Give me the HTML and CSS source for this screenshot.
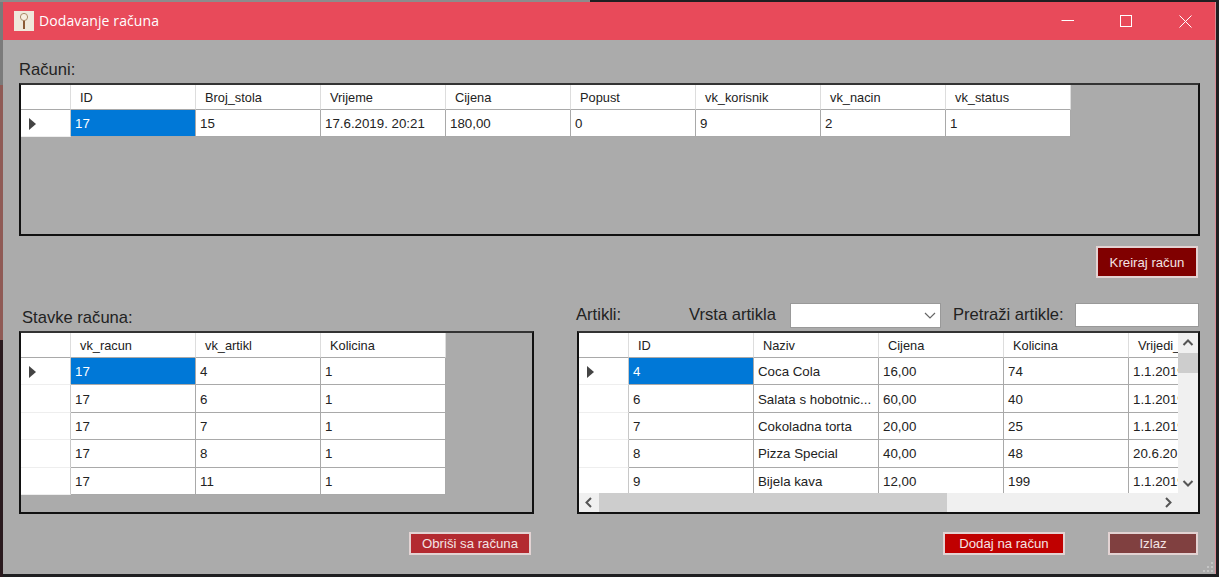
FILE: index.html
```html
<!DOCTYPE html>
<html lang="en">
<head>
  <meta charset="UTF-8" />
  <title>Dodavanje računa</title>
  <link rel="stylesheet" href="styles.css">
</head>
<body>

  <div class="window">
    <div class="titlebar">
      <svg class="app-icon" width="20" height="20" viewBox="0 0 20 20">
        <rect width="20" height="20" fill="#efe9dc"/>
        <path d="M10 9V18" stroke="#8a5a35" stroke-width="2"/>
        <circle cx="10" cy="6" r="3.600" fill="#f7efe0" stroke="#a98a68"/>
      </svg>
      <span class="title">Dodavanje računa</span>
      <div class="window-controls">
        <svg width="58" height="38" viewBox="0 0 58 38"><path d="M22.500 18.500H35" stroke="#fff"/></svg>
        <svg width="59" height="38" viewBox="0 0 59 38"><rect x="23.500" y="13.500" width="11" height="11" fill="none" stroke="#fff"/></svg>
        <svg width="59" height="38" viewBox="0 0 59 38"><path d="M23.500 13.500L35.500 25.500M35.500 13.500L23.500 25.500" stroke="#fff"/></svg>
      </div>
    </div>

    <div class="content">
      <div class="label-row">Računi:</div>
      <div class="grid-box grid-top">
        <table class="grid">
          <tr class="head">
            <th class="row-head"></th><th>ID</th><th>Broj_stola</th><th>Vrijeme</th><th>Cijena</th><th>Popust</th><th>vk_korisnik</th><th>vk_nacin</th><th>vk_status</th>
          </tr>
          <tr>
            <td class="row-head"><span class="arrow"></span></td><td class="selected">17</td><td>15</td><td>17.6.2019. 20:21</td><td>180,00</td><td>0</td><td>9</td><td>2</td><td>1</td>
          </tr>
        </table>
      </div>

      <div class="action-row">
        <button class="btn btn-create">Kreiraj račun</button>
      </div>

      <div class="lower">
        <div class="toolbar toolbar-left">Stavke računa:</div>
        <div class="toolbar toolbar-right">
          <span class="lbl-artikli">Artikli:</span>
          <span class="lbl-vrsta">Vrsta artikla</span>
          <div class="combo">
            <svg width="12" height="7" viewBox="0 0 12 7"><path d="M1 1L6 6L11 1" fill="none" stroke="#666" stroke-width="1.200"/></svg>
          </div>
          <span class="lbl-search">Pretraži artikle:</span>
          <div class="search"></div>
        </div>

        <div class="grid-box grid-items">
          <table class="grid">
            <tr class="head"><th class="row-head"></th><th>vk_racun</th><th>vk_artikl</th><th>Kolicina</th></tr>
            <tr><td class="row-head"><span class="arrow"></span></td><td class="selected">17</td><td>4</td><td>1</td></tr>
            <tr><td class="row-head"></td><td>17</td><td>6</td><td>1</td></tr>
            <tr><td class="row-head"></td><td>17</td><td>7</td><td>1</td></tr>
            <tr><td class="row-head"></td><td>17</td><td>8</td><td>1</td></tr>
            <tr><td class="row-head"></td><td>17</td><td>11</td><td>1</td></tr>
          </table>
        </div>

        <div class="grid-box grid-articles">
          <div class="viewport">
            <table class="grid">
              <tr class="head"><th class="row-head"></th><th>ID</th><th>Naziv</th><th>Cijena</th><th>Kolicina</th><th>Vrijedi_do</th></tr>
              <tr><td class="row-head"><span class="arrow"></span></td><td class="selected">4</td><td>Coca Cola</td><td>16,00</td><td>74</td><td>1.1.2019.</td></tr>
              <tr><td class="row-head"></td><td>6</td><td>Salata s hobotnic...</td><td>60,00</td><td>40</td><td>1.1.2019.</td></tr>
              <tr><td class="row-head"></td><td>7</td><td>Cokoladna torta</td><td>20,00</td><td>25</td><td>1.1.2019.</td></tr>
              <tr><td class="row-head"></td><td>8</td><td>Pizza Special</td><td>40,00</td><td>48</td><td>20.6.2019.</td></tr>
              <tr><td class="row-head"></td><td>9</td><td>Bijela kava</td><td>12,00</td><td>199</td><td>1.1.2019.</td></tr>
            </table>
          </div>
          <div class="vscroll">
            <svg width="20" height="20" viewBox="0 0 20 20"><path d="M5.500 12L10 7.500L14.500 12" fill="none" stroke="#555" stroke-width="2"/></svg>
            <div class="vthumb"></div>
            <svg class="vdown" width="20" height="20" viewBox="0 0 20 20"><path d="M5.500 8L10 12.500L14.500 8" fill="none" stroke="#555" stroke-width="2"/></svg>
          </div>
          <div class="hscroll">
            <svg width="20" height="19" viewBox="0 0 20 19"><path d="M12 5L7.500 9.500L12 14" fill="none" stroke="#555" stroke-width="2"/></svg>
            <div class="hthumb"></div>
            <svg class="hright" width="20" height="19" viewBox="0 0 20 19"><path d="M8 5L12.500 9.500L8 14" fill="none" stroke="#555" stroke-width="2"/></svg>
          </div>
          <div class="corner"></div>
        </div>

        <div class="footer footer-left">
          <button class="btn btn-remove">Obriši sa računa</button>
        </div>
        <div class="footer footer-right">
          <button class="btn btn-add">Dodaj na račun</button>
          <button class="btn btn-exit">Izlaz</button>
        </div>
      </div>
    </div>

    <svg class="grip" width="12" height="12" viewBox="0 0 12 12" fill="#c4c4c4">
      <rect x="9" y="1" width="2" height="2"/>
      <rect x="5" y="5" width="2" height="2"/><rect x="9" y="5" width="2" height="2"/>
      <rect x="1" y="9" width="2" height="2"/><rect x="5" y="9" width="2" height="2"/><rect x="9" y="9" width="2" height="2"/>
    </svg>
  </div>

</body>
</html>
```

FILE: styles.css
```css
:root {
  --panel: #ababab;
  --title: #e84a5a;
  --line: #a9a9a9;
  --text: #222;
}

* {
  box-sizing: border-box;
}

html, body {
  height: 100%;
}

body {
  margin: 0;
  overflow: hidden;
  font-family: "Liberation Sans", sans-serif;
  color: var(--text);
  background:
    linear-gradient(#8c8c8c 0 2px, transparent 2px) 0 0 / 590px 100% no-repeat,
    linear-gradient(#7a7a7a 0 85px, #8f5a55 85px 340px, #2a1a1e 340px) 0 0 / 3px 100% no-repeat,
    #1f1f21;
}

/* the form sits on a desktop, so this one is placed */
.window {
  position: absolute;
  left: 3px;
  top: 2px;
  width: 1213px;
  height: 572px;
  background: var(--panel);
  border-right: 1px solid #d98a93;
}

.titlebar {
  display: flex;
  align-items: center;
  height: 38px;
  padding-left: 11px;
  background: var(--title);
  color: #fff;
}

.app-icon {
  flex: none;
}

.title {
  margin-left: 5px;
  margin-bottom: 2px;
  font-family: "Open Sans", sans-serif;
  font-size: 14px;
  letter-spacing: 0.1px;
}

.window-controls {
  display: flex;
  margin-left: auto;
}

.content {
  padding: 20px 15px 0 16px;
}

.label-row {
  height: 23px;
  padding-top: 1px;
  font-size: 16.600px;
  line-height: 18px;
}

.grid-box {
  border: 2px solid #111;
  border-top-color: #333;
  background: var(--panel);
  overflow: hidden;
}

.grid-top {
  height: 153px;
}

.grid {
  table-layout: fixed;
  width: max-content;
  border-collapse: separate;
  border-spacing: 0;
  font-size: 13.300px;
}

.grid th, .grid td {
  width: 125px;
  height: 27.400px;
  padding: 1px 0 0 4px;
  overflow: hidden;
  white-space: nowrap;
  text-align: left;
  font-weight: normal;
  background: #fff;
  border-right: 1px solid var(--line);
  border-bottom: 1px solid var(--line);
}

.grid .head th {
  height: 25px;
  padding: 1px 0 0 9px;
  font-size: 12.800px;
  border-right-color: #ddd;
  border-bottom-color: var(--line);
}

.grid .row-head {
  width: 50px;
  padding: 2px 0 0 8px;
  border-right-color: #c8c8c8;
  border-bottom-color: #eee;
}

.grid td.selected {
  background: #0078d7;
  color: #fff;
}

.arrow {
  display: block;
  width: 0;
  height: 0;
  border-style: solid;
  border-width: 6px 0 6px 7px;
  border-color: transparent transparent transparent #444;
}

.action-row {
  display: flex;
  justify-content: flex-end;
  height: 32px;
  margin-top: 10px;
  padding-right: 2px;
}

.btn {
  padding: 0;
  font-family: "Liberation Sans", sans-serif;
  font-size: 13.200px;
  color: #f4e4e4;
  border: 2px solid #e3d3d3;
  cursor: pointer;
}

.btn-create { width: 102px; background: #800000; }
.btn-remove { width: 122px; background: #b32a30; }
.btn-add { width: 122px; background: #c00000; }
.btn-exit { width: 90px; background: #804040; }

.lower {
  display: grid;
  grid-template-columns: 515px 623px;
  grid-template-rows: 30px 183px 23px;
  column-gap: 43px;
  margin-top: 23px;
}

.toolbar {
  display: flex;
  align-items: flex-start;
  font-size: 16.600px;
  line-height: 18px;
}

.toolbar-left {
  padding: 8px 0 0 3px;
}

.toolbar-right {
  margin-left: -1px;
  padding-top: 2px;
}

.toolbar-right span {
  margin-top: 3px;
}

.lbl-artikli { width: 113px; }
.lbl-vrsta { width: 101px; }
.lbl-search { width: 122px; white-space: nowrap; }

.combo {
  display: flex;
  align-items: center;
  justify-content: flex-end;
  width: 151px;
  height: 25px;
  margin-right: 12px;
  padding-right: 4px;
  background: #fff;
  border: 1px solid #999;
}

.search {
  width: 124px;
  height: 24px;
  background: #fff;
  border: 1px solid #999;
}

.grid-articles {
  display: grid;
  grid-template-columns: 1fr 20px;
  grid-template-rows: 1fr 19px;
}

.viewport {
  overflow: hidden;
  background: #fff;
}

.vscroll {
  display: flex;
  flex-direction: column;
  background: #f0f0f0;
}

.vthumb {
  height: 20px;
  background: #cdcdcd;
}

.vdown {
  margin-top: auto;
}

.hscroll {
  display: flex;
  background: #f0f0f0;
}

.hthumb {
  width: 348px;
  background: #cdcdcd;
}

.hright {
  margin-left: auto;
}

.corner {
  background: #f0f0f0;
}

.footer {
  display: flex;
  justify-content: flex-end;
  margin-top: 18px;
  height: 23px;
}

.footer-left {
  padding-right: 3px;
}

.footer-right {
  gap: 43px;
  padding-right: 2px;
}

.grip {
  position: absolute;
  right: 1px;
  bottom: 1px;
}
```
